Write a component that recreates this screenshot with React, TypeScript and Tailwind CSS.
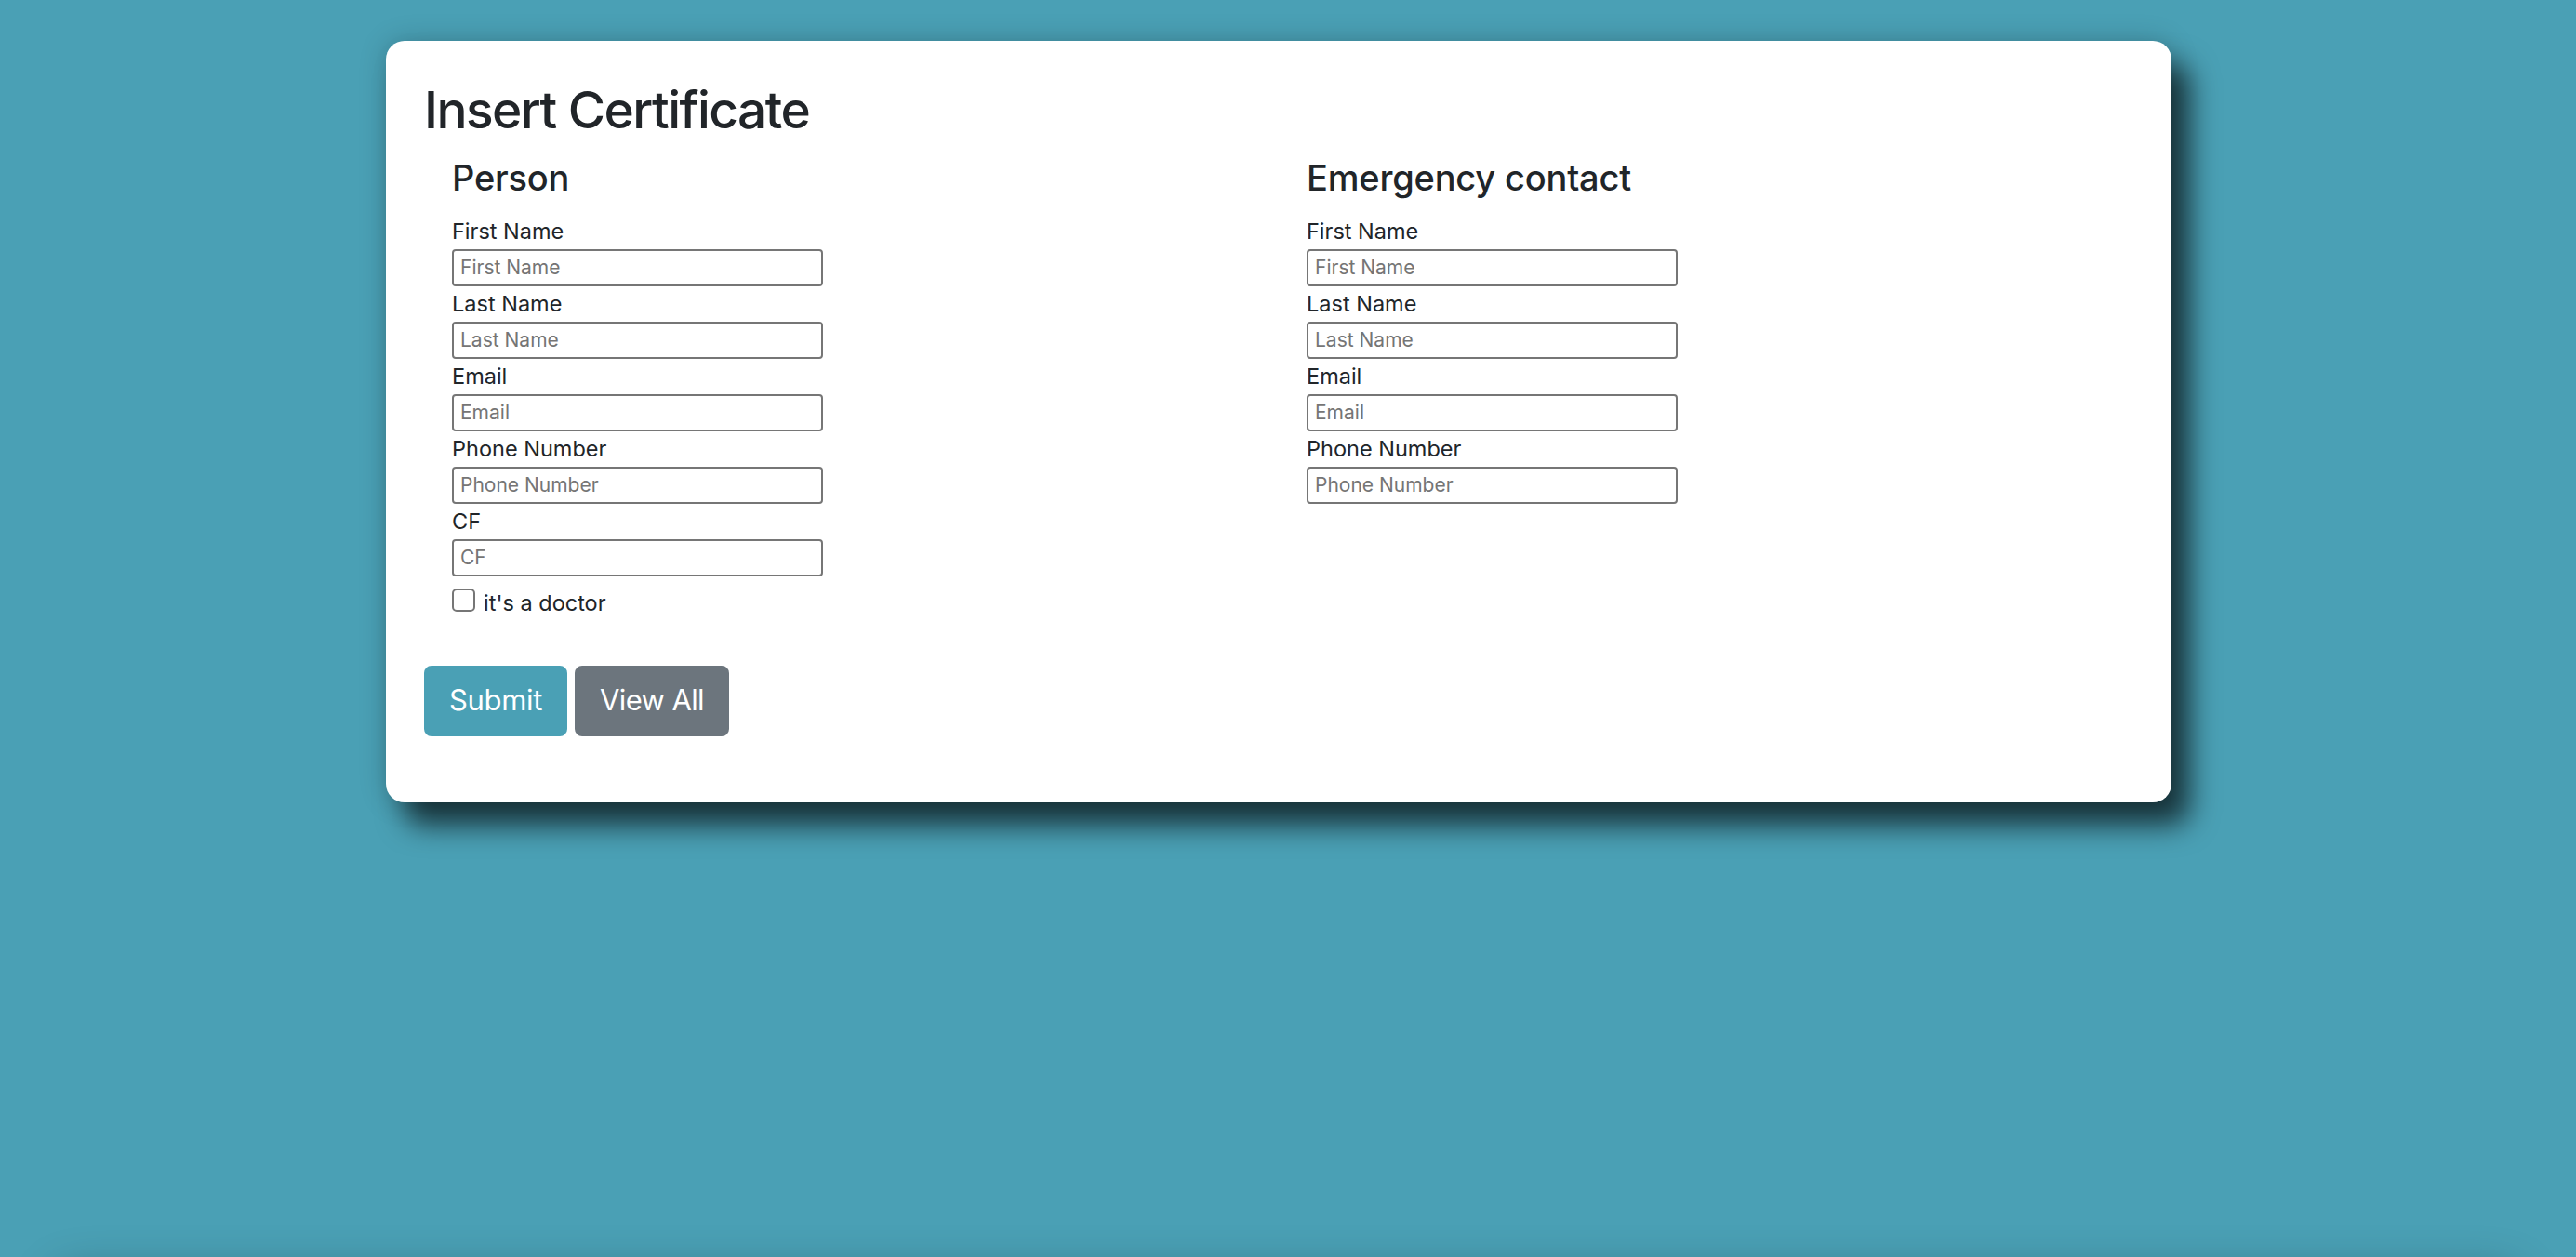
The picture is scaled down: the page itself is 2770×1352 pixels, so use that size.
import React from 'react';

const font = { fontFamily: 'Inter, "Noto Sans", "Liberation Sans", sans-serif' };

function Field({ label }: { label: string }) {
  return (
    <div className="flex flex-col">
      <label className="text-[23.5px] leading-[38px] text-[#212529]">{label}</label>
      <input
        type="text"
        placeholder={label}
        className="w-[399px] h-[40px] border-2 border-[#767676] rounded-[4px] px-[7px] text-[21px] text-[#212529] placeholder:text-[#757575] bg-white outline-none"
      />
    </div>
  );
}

function Column({ title, fields, doctor }: { title: string; fields: string[]; doctor?: boolean }) {
  return (
    <div className="px-[30px]">
      <h5 className="text-[38px] leading-[1.2] font-medium tracking-[-0.005em] text-[#212529] mb-[15px]">{title}</h5>
      {fields.map((f) => (
        <Field key={f} label={f} />
      ))}
      {doctor && (
        <div className="flex items-start gap-[9px] mt-[10px]">
          <input
            type="checkbox"
            className="appearance-none w-[25px] h-[25px] mt-[3px] border-2 border-[#767676] rounded-[5px] bg-white"
          />
          <span className="text-[23.5px] leading-[38px] text-[#212529]">it's a doctor</span>
        </div>
      )}
    </div>
  );
}

export default function App() {
  const person = ['First Name', 'Last Name', 'Email', 'Phone Number', 'CF'];
  const contact = ['First Name', 'Last Name', 'Email', 'Phone Number'];

  return (
    <div className="relative h-[1352px] overflow-hidden bg-[#4aa0b5]" style={font}>
      <div className="ml-[415px] pt-[44px]">
        <div className="w-[1920px] bg-white rounded-[20px] pt-[41px] px-[41px] pb-[71px] shadow-[20px_25px_30px_rgba(0,0,0,0.65),0_0_30px_rgba(0,0,0,0.2)]">
          <h1 className="text-[55px] leading-[1.2] font-medium tracking-[-0.028em] text-[#212529] mb-[18px]">Insert Certificate</h1>
          <div className="grid grid-cols-2">
            <Column title="Person" fields={person} doctor />
            <Column title="Emergency contact" fields={contact} />
          </div>
          <div className="flex gap-[8px] mt-[48px]">
            <button className="w-[154px] h-[76px] rounded-[8px] bg-[#4aa0b5] text-white text-[31px] tracking-[-0.01em]">Submit</button>
            <button className="w-[166px] h-[76px] rounded-[8px] bg-[#6c757d] text-white text-[31px] tracking-[-0.02em]">View All</button>
          </div>
        </div>
      </div>
      {/* something below the fold casts a soft shadow up into view */}
      <div className="absolute left-[60px] right-[60px] top-[1380px] h-[200px] rounded-[20px] bg-[#4aa0b5] shadow-[0_-10px_50px_rgba(0,0,0,0.3)]" />
    </div>
  );
}
